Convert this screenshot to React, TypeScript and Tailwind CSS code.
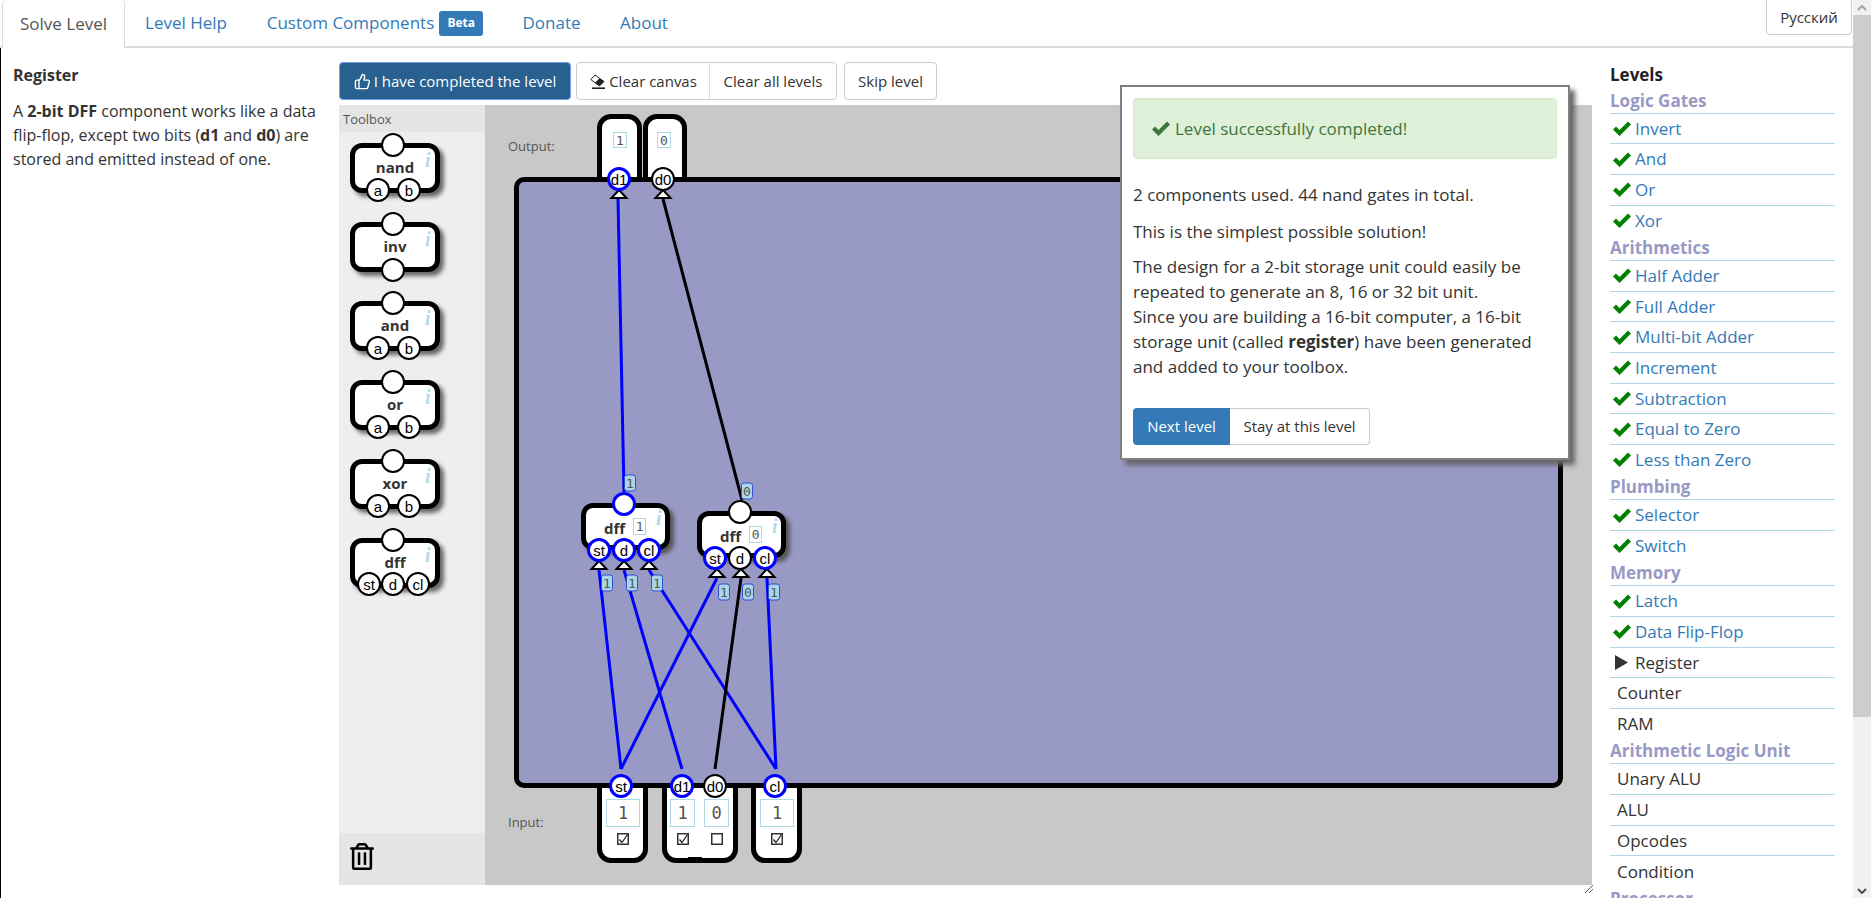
import { ThumbsUp } from "lucide-react";
import { FaRegTrashAlt } from "react-icons/fa";

const SANS = "font-['Open_Sans',sans-serif]";
const ARIAL = "font-['Liberation_Sans',sans-serif]";
const MONO = "font-['DejaVu_Sans_Mono',monospace]";

type Level = { name: string; state?: "done" | "current" };
type Group = { title: string; levels: Level[] };

const GROUPS: Group[] = [
  {
    title: "Logic Gates",
    levels: [
      { name: "Invert", state: "done" },
      { name: "And", state: "done" },
      { name: "Or", state: "done" },
      { name: "Xor", state: "done" },
    ],
  },
  {
    title: "Arithmetics",
    levels: [
      { name: "Half Adder", state: "done" },
      { name: "Full Adder", state: "done" },
      { name: "Multi-bit Adder", state: "done" },
      { name: "Increment", state: "done" },
      { name: "Subtraction", state: "done" },
      { name: "Equal to Zero", state: "done" },
      { name: "Less than Zero", state: "done" },
    ],
  },
  {
    title: "Plumbing",
    levels: [
      { name: "Selector", state: "done" },
      { name: "Switch", state: "done" },
    ],
  },
  {
    title: "Memory",
    levels: [
      { name: "Latch", state: "done" },
      { name: "Data Flip-Flop", state: "done" },
      { name: "Register", state: "current" },
      { name: "Counter" },
      { name: "RAM" },
    ],
  },
  {
    title: "Arithmetic Logic Unit",
    levels: [{ name: "Unary ALU" }, { name: "ALU" }, { name: "Opcodes" }, { name: "Condition" }],
  },
  { title: "Processor", levels: [] },
];

function CheckMark({ className }: { className: string }) {
  return (
    <svg viewBox="0 0 18 15" className={className} fill="currentColor">
      <polygon points="0,8.5 3,5.5 6.5,9 15,0.5 18,3.5 6.5,15" />
    </svg>
  );
}

function EraseIcon() {
  return (
    <svg viewBox="0 0 15 15" className="h-[15px] w-[15px] shrink-0" fill="#222">
      <polygon points="0.8,5.5 5,1 14,7.5 9.5,12" fill="none" stroke="#222" strokeWidth="1" />
      <polygon points="5,8.75 9.5,4.15 14,7.5 9.5,12" />
      <rect x="2" y="13.4" width="13" height="1.6" />
    </svg>
  );
}

function Pin({ label, className, blue }: { label?: string; className: string; blue?: boolean }) {
  return (
    <div
      className={`absolute z-20 flex size-[24px] -translate-x-1/2 -translate-y-1/2 items-center justify-center rounded-full bg-white text-[15px] leading-none text-black ${ARIAL} ${
        blue ? "border-[3px] border-[#0000ff]" : "border-2 border-black"
      } ${className}`}
    >
      {label}
    </div>
  );
}

function Info({ className }: { className: string }) {
  return (
    <span
      className={`absolute font-['Liberation_Serif',serif] text-[20px] leading-none font-bold text-[#b4dbe9] italic ${className}`}
    >
      i
    </span>
  );
}

function Gate({ name, inputs }: { name: string; inputs: string }) {
  return (
    <div className="relative ml-[11px] h-[50px] w-[90px]">
      <div className="absolute inset-0 rounded-[12px] border-[5px] border-black bg-white shadow-[4px_4px_4px_#666]" />
      <span
        className={`absolute inset-x-0 top-[13px] z-10 text-center text-[15px] leading-[22px] font-bold text-[#333] ${SANS}`}
      >
        {name}
      </span>
      <Info className="top-[7px] left-[75px]" />
      <Pin className="top-[2px] left-[43px]" />
      {inputs === "ab" && (
        <>
          <Pin label="a" className="top-[47px] left-[28px]" />
          <Pin label="b" className="top-[47px] left-[59px]" />
        </>
      )}
      {inputs === "out" && <Pin className="top-[48px] left-[43px]" />}
      {inputs === "dff" && (
        <>
          <Pin label="st" className="top-[46px] left-[19px]" />
          <Pin label="d" className="top-[46px] left-[43px]" />
          <Pin label="cl" className="top-[46px] left-[68px]" />
        </>
      )}
    </div>
  );
}

function CanvasDff({ position, value, d }: { position: string; value: string; d: boolean }) {
  return (
    <div className={`absolute z-20 h-[47px] w-[89px] ${position}`}>
      <div className="absolute inset-0 rounded-[12px] border-[5px] border-black bg-white shadow-[4px_4px_4px_#555]" />
      <div className="absolute top-[15px] left-[23px] z-10 flex items-start gap-[8px]">
        <span className={`text-[15px] leading-[20px] font-bold text-[#333] ${SANS}`}>dff</span>
        <span
          className={`flex h-[17px] w-[13px] items-center justify-center border border-[#add8e6] text-[13px] leading-none text-[#555] ${MONO}`}
        >
          {value}
        </span>
      </div>
      <Info className="top-[5px] left-[75px]" />
      <Pin blue={value === "1"} className="top-[1px] left-[43px]" />
      <Pin blue label="st" className="top-[47px] left-[18px]" />
      <Pin blue={d} label="d" className="top-[47px] left-[43px]" />
      <Pin blue label="cl" className="top-[47px] left-[68px]" />
    </div>
  );
}

function Bit({ value, position, small }: { value: string; position: string; small?: boolean }) {
  return (
    <div
      className={`absolute z-20 flex items-center justify-center border border-[#add8e6] bg-white leading-none text-[#555] ${MONO} ${
        small ? "h-[16px] w-[14px] text-[13px]" : "h-[28px] text-[17px]"
      } ${position}`}
    >
      {value}
    </div>
  );
}

function Box({ checked, position }: { checked: boolean; position: string }) {
  return (
    <svg viewBox="0 0 12 12" className={`absolute z-20 size-[12px] ${position}`}>
      <rect x="0.75" y="0.75" width="10.5" height="10.5" fill="#fff" stroke="#333" strokeWidth="1.5" />
      {checked && <path d="M2.5 6.5 L5 9.5 L10.5 1.5" fill="none" stroke="#222" strokeWidth="1.3" />}
    </svg>
  );
}

function WireValue({ value, position }: { value: string; position: string }) {
  return (
    <div
      className={`absolute z-20 flex h-[17px] w-[12px] -translate-x-1/2 -translate-y-1/2 items-center justify-center rounded-[3px] border border-[#2f4fd0] bg-[#a9d6e8] text-[13px] leading-none text-[#555] ${MONO} ${position}`}
    >
      {value}
    </div>
  );
}

const WIRES = [
  { x1: 618, y1: 199, x2: 624, y2: 492, color: "#0000ff" },
  { x1: 663, y1: 199, x2: 742, y2: 500, color: "#000" },
  { x1: 599, y1: 570, x2: 621, y2: 769, color: "#0000ff" },
  { x1: 624, y1: 570, x2: 682, y2: 769, color: "#0000ff" },
  { x1: 649, y1: 570, x2: 776, y2: 769, color: "#0000ff" },
  { x1: 717, y1: 578, x2: 621, y2: 769, color: "#0000ff" },
  { x1: 741, y1: 578, x2: 715, y2: 769, color: "#000" },
  { x1: 767, y1: 578, x2: 776, y2: 769, color: "#0000ff" },
];

const ARROWS = [
  [619, 191],
  [663, 191],
  [599, 562],
  [624, 562],
  [649, 562],
  [717, 570],
  [741, 570],
  [767, 570],
];

function Canvas() {
  return (
    <div className="relative flex-1 bg-[#c8c8c8] pt-[72px] pl-[29px]">
      <span className={`absolute top-[33px] left-[23px] text-[13px] leading-[16px] text-[#555] ${SANS}`}>Output:</span>
      <span className={`absolute top-[709px] left-[23px] text-[13px] leading-[16px] text-[#555] ${SANS}`}>Input:</span>

      {/* output and input housings sit behind the board */}
      <div className="absolute top-[9px] left-[112px] h-[80px] w-[45px] rounded-[14px] border-[5px] border-black bg-white" />
      <div className="absolute top-[9px] left-[158px] h-[80px] w-[44px] rounded-[14px] border-[5px] border-black bg-white" />
      <div className="absolute top-[670px] left-[112px] h-[88px] w-[51px] rounded-[14px] border-[5px] border-black bg-white" />
      <div className="absolute top-[670px] left-[177px] h-[88px] w-[76px] rounded-[14px] border-[5px] border-black bg-white" />
      <div className="absolute top-[752px] left-[203px] h-[2px] w-[14px] bg-black" />
      <div className="absolute top-[670px] left-[266px] h-[88px] w-[51px] rounded-[14px] border-[5px] border-black bg-white" />

      <div className="relative z-10 h-[611px] w-[1049px] rounded-[10px] border-[5px] border-black bg-[#9999c6]" />

      <svg viewBox="485 105 1107 780" className="absolute inset-0 z-10 h-[780px] w-[1107px]">
        {WIRES.map((w, i) => (
          <line key={i} x1={w.x1} y1={w.y1} x2={w.x2} y2={w.y2} stroke={w.color} strokeWidth="3" />
        ))}
        {ARROWS.map(([x, y], i) => (
          <polygon
            key={i}
            points={`${x},${y - 1} ${x + 7.5},${y + 7} ${x - 7.5},${y + 7}`}
            fill="#fff"
            stroke="#000"
            strokeWidth="2"
          />
        ))}
      </svg>

      <Bit small value="1" position="top-[27px] left-[128px]" />
      <Bit small value="0" position="top-[27px] left-[172px]" />
      <Pin blue label="d1" className="top-[74px] left-[134px]" />
      <Pin label="d0" className="top-[74px] left-[178px]" />

      <CanvasDff position="top-[398px] left-[96px]" value="1" d />
      <CanvasDff position="top-[406px] left-[212px]" value="0" d={false} />

      <WireValue value="1" position="top-[378px] left-[145px]" />
      <WireValue value="0" position="top-[386px] left-[262px]" />
      <WireValue value="1" position="top-[478px] left-[122px]" />
      <WireValue value="1" position="top-[478px] left-[147px]" />
      <WireValue value="1" position="top-[478px] left-[172px]" />
      <WireValue value="1" position="top-[487px] left-[239px]" />
      <WireValue value="0" position="top-[487px] left-[263px]" />
      <WireValue value="1" position="top-[487px] left-[289px]" />

      <Pin blue label="st" className="top-[681px] left-[136px]" />
      <Pin blue label="d1" className="top-[681px] left-[197px]" />
      <Pin label="d0" className="top-[681px] left-[230px]" />
      <Pin blue label="cl" className="top-[681px] left-[290px]" />

      <Bit value="1" position="top-[694px] left-[121px] w-[34px]" />
      <Bit value="1" position="top-[694px] left-[185px] w-[25px]" />
      <Bit value="0" position="top-[694px] left-[219px] w-[25px]" />
      <Bit value="1" position="top-[694px] left-[275px] w-[34px]" />
      <Box checked position="top-[728px] left-[132px]" />
      <Box checked position="top-[728px] left-[192px]" />
      <Box checked={false} position="top-[728px] left-[226px]" />
      <Box checked position="top-[728px] left-[286px]" />

      <svg viewBox="0 0 8 8" className="absolute top-[780px] left-[1100px] size-[8px]" stroke="#555" strokeWidth="1">
        <path d="M0 8 L8 0 M4 8 L8 4" />
      </svg>

      <div
        className={`absolute top-[-20px] left-[635px] z-30 h-[375px] w-[450px] border-2 border-[#808080] bg-white px-[11px] pt-[11px] text-[17px] leading-[25px] text-[#333] shadow-[5px_5px_5px_#666] ${SANS}`}
      >
        <div className="flex h-[61px] items-center rounded-[4px] border border-[#d6e9c6] bg-[#dff0d8] pl-[18px] text-[#3c763d]">
          <CheckMark className="mr-[5px] h-[15px] w-[18px]" />
          Level successfully completed!
        </div>
        <p className="mt-[23px]">2 components used. 44 nand gates in total.</p>
        <p className="mt-[12px]">This is the simplest possible solution!</p>
        <p className="mt-[10px]">
          The design for a 2-bit storage unit could easily be repeated to generate an 8, 16 or 32 bit unit.
          <br />
          Since you are building a 16-bit computer, a 16-bit storage unit (called <b>register</b>) have been generated
          and added to your toolbox.
        </p>
        <div className="mt-[29px] flex h-[37px] w-[237px] text-[15px]">
          <div className="flex w-[97px] items-center justify-center rounded-l-[4px] bg-[#337ab7] text-white">
            Next level
          </div>
          <div className="flex flex-1 items-center justify-center rounded-r-[4px] border border-l-0 border-[#ccc]">
            Stay at this level
          </div>
        </div>
      </div>
    </div>
  );
}

function Toolbox() {
  return (
    <div className="flex w-[146px] flex-col bg-[#eee]">
      <div className={`h-[27px] bg-[#e5e5e5] pl-[4px] text-[13px] leading-[28px] text-[#555] ${SANS}`}>Toolbox</div>
      <div className="flex flex-1 flex-col gap-[29px] pt-[11px]">
        <Gate name="nand" inputs="ab" />
        <Gate name="inv" inputs="out" />
        <Gate name="and" inputs="ab" />
        <Gate name="or" inputs="ab" />
        <Gate name="xor" inputs="ab" />
        <Gate name="dff" inputs="dff" />
      </div>
      <div className="h-[52px] bg-[#e5e5e5] pt-[10px] pl-[11px]">
        <FaRegTrashAlt className="h-[27px] w-[24px] text-black" />
      </div>
    </div>
  );
}

function LevelList() {
  return (
    <aside className={`h-full w-[261px] overflow-hidden pt-[14px] pl-[18px] text-[17px] ${SANS}`}>
      <h3 className="flex h-[26px] items-center font-bold text-[#222]">Levels</h3>
      {GROUPS.map((group) => (
        <div key={group.title} className="w-[225px]">
          <h4 className="flex h-[24.6px] items-center font-bold text-[#9999c6]">{group.title}</h4>
          {group.levels.map((level) => (
            <div key={level.name} className="flex h-[30.7px] items-center border-t border-[#add8e6]">
              {level.state === "done" && (
                <>
                  <CheckMark className="ml-[3px] h-[15px] w-[18px] text-[#008000]" />
                  <span className="ml-[4px] text-[#337ab7]">{level.name}</span>
                </>
              )}
              {level.state === "current" && (
                <>
                  <svg viewBox="0 0 13 15" className="ml-[5px] h-[15px] w-[13px]" fill="#333">
                    <polygon points="0,0 13,7.5 0,15" />
                  </svg>
                  <span className="ml-[7px] text-[#333]">{level.name}</span>
                </>
              )}
              {!level.state && <span className="ml-[7px] text-[#333]">{level.name}</span>}
            </div>
          ))}
        </div>
      ))}
    </aside>
  );
}

function Scrollbar() {
  return (
    <div className="flex h-full w-[18px] flex-col bg-[#f1f1f1]">
      <div className="flex h-[15px] items-center justify-center">
        <svg viewBox="0 0 10 6" className="h-[6px] w-[10px]" fill="none" stroke="#a3a3a3" strokeWidth="2">
          <path d="M1 5 L5 1 L9 5" />
        </svg>
      </div>
      <div className="h-[702px] bg-[#cdcdcd]" />
      <div className="flex-1" />
      <div className="flex h-[15px] items-center justify-center">
        <svg viewBox="0 0 10 6" className="h-[6px] w-[10px]" fill="none" stroke="#505050" strokeWidth="2">
          <path d="M1 1 L5 5 L9 1" />
        </svg>
      </div>
    </div>
  );
}

export default function App() {
  return (
    <div className={`flex h-[898px] w-[1871px] overflow-hidden bg-white ${SANS}`}>
      <div className="flex w-[1853px] flex-col">
        <nav className="flex h-[48px] shrink-0 items-start border-b-2 border-[#ddd] text-[17px] text-[#337ab7]">
          <div className="ml-[2px] flex h-[48px] w-[123px] items-center justify-center rounded-t-[4px] border-x border-[#ddd] bg-white text-[#555]">
            Solve Level
          </div>
          <div className="flex h-[46px] w-[122px] items-center justify-center">Level Help</div>
          <div className="flex h-[46px] w-[256px] items-center justify-center gap-[5px]">
            Custom Components
            <span className="flex h-[25px] w-[44px] items-center justify-center rounded-[3px] bg-[#337ab7] text-[12px] font-bold text-white">
              Beta
            </span>
          </div>
          <div className="flex h-[46px] w-[97px] items-center justify-center">Donate</div>
          <div className="flex h-[46px] w-[88px] items-center justify-center">About</div>
          <div className="mt-[-1px] mr-[1px] ml-auto flex h-[36px] w-[86px] items-center justify-center rounded-b-[4px] border border-[#ccc] text-[15px] text-[#333]">
            Русский
          </div>
        </nav>
        <main className="flex min-h-0 flex-1 border-l border-black">
          <section className="w-[338px] shrink-0 pt-[14px] pl-[12px] text-[16px] text-[#333]">
            <h3 className="flex h-[25px] items-center font-bold">Register</h3>
            <p className="mt-[12px] w-[318px] leading-[24px]">
              A <b>2-bit DFF</b> component works like a data flip-flop, except two bits (<b>d1</b> and <b>d0</b>) are
              stored and emitted instead of one.
            </p>
          </section>
          <section className="flex w-[1253px] shrink-0 flex-col">
            <div className="mt-[14px] flex h-[38px] text-[15px] text-[#333]">
              <div className="flex w-[232px] items-center justify-center gap-[3px] rounded-[4px] border border-[#6f9fe8] bg-[#286090] text-white">
                <ThumbsUp className="size-[17px]" />I have completed the level
              </div>
              <div className="ml-[5px] flex w-[261px] rounded-[4px] border border-[#ccc]">
                <div className="flex w-[133px] items-center justify-center gap-[4px] border-r border-[#ddd] pl-[1px]">
                  <EraseIcon />
                  Clear canvas
                </div>
                <div className="flex flex-1 items-center justify-center">Clear all levels</div>
              </div>
              <div className="ml-[7px] flex w-[93px] items-center justify-center rounded-[4px] border border-[#ccc]">
                Skip level
              </div>
            </div>
            <div className="mt-[5px] flex h-[780px]">
              <Toolbox />
              <Canvas />
            </div>
          </section>
          <LevelList />
        </main>
      </div>
      <Scrollbar />
    </div>
  );
}
